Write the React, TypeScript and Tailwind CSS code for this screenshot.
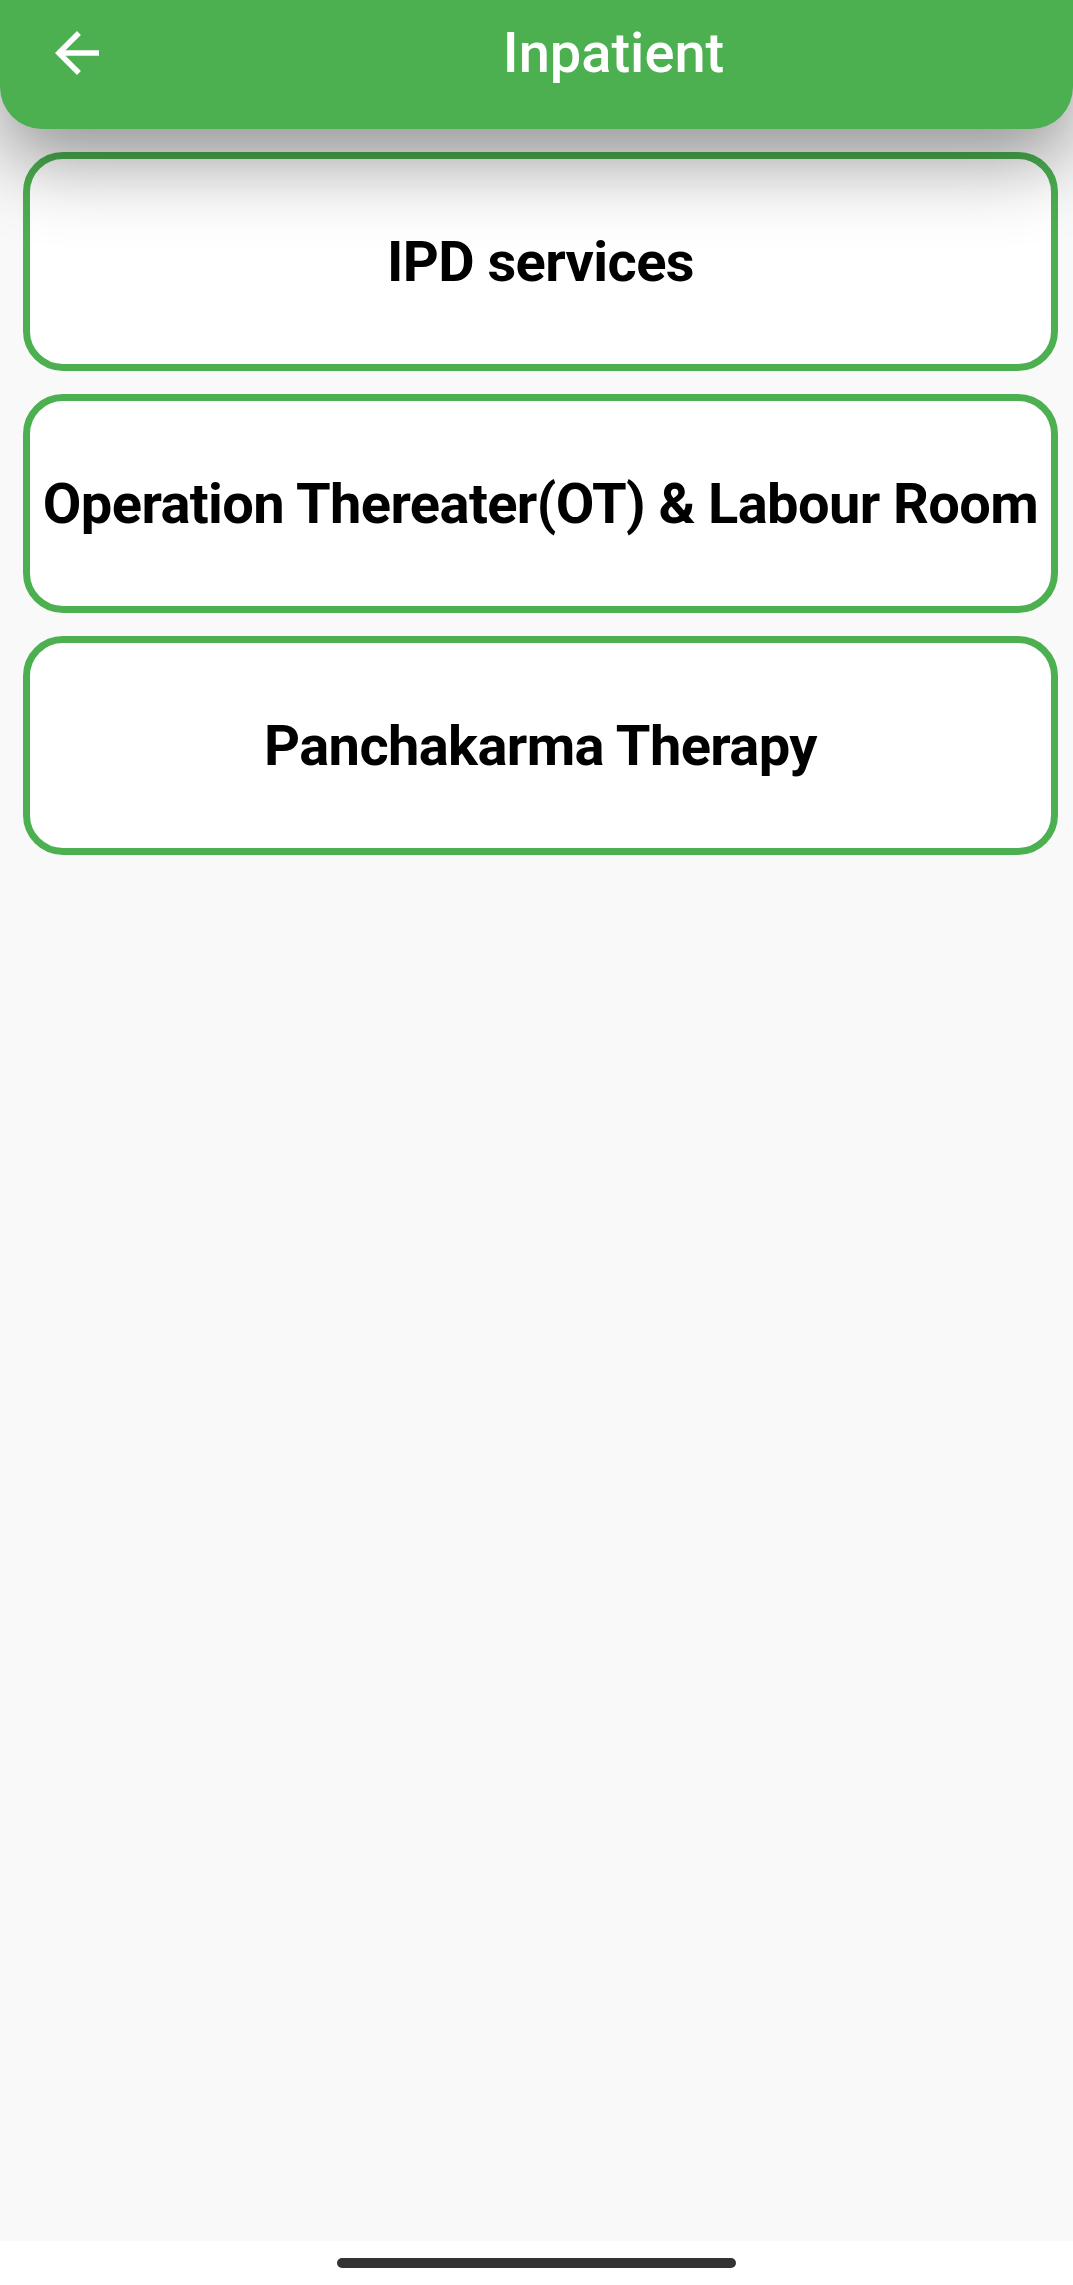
import React from "react";

const ITEMS = [
  "IPD services",
  "Operation Thereater(OT) & Labour Room",
  "Panchakarma Therapy",
];

function BackArrow() {
  return (
    <svg viewBox="0 0 24 24" className="w-[66px] h-[66px]" fill="#ffffff" aria-hidden="true">
      <path d="M20 11H7.83l5.59-5.59L12 4l-8 8 8 8 1.41-1.41L7.83 13H20v-2z" />
    </svg>
  );
}

export default function App() {
  return (
    <div
      className="w-[1073px] h-[2285px] flex flex-col bg-[#f9f9f9] overflow-hidden"
      style={{ fontFamily: "Roboto, 'Noto Sans', sans-serif" }}
    >
      {/* App bar */}
      <header className="relative z-10 h-[129px] shrink-0 bg-[#4caf50] rounded-b-[42px] pb-[25px] shadow-[0_30px_80px_rgba(0,0,0,0.42)]">
        <div className="h-[104px] flex items-center pt-[2px]">
          <button className="w-[154px] h-full flex items-center justify-center" aria-label="Back">
            <BackArrow />
          </button>
          <h1 className="flex-1 text-center text-white text-[56px] font-medium leading-none">
            Inpatient
          </h1>
        </div>
      </header>

      {/* Menu cards */}
      <main className="flex-1 flex flex-col gap-[23px] pt-[23px] pl-[23px] pr-[15px]">
        {ITEMS.map((label) => (
          <button
            key={label}
            className="h-[219px] w-full flex items-center justify-center bg-white border-[7px] border-[#4caf50] rounded-[40px]"
          >
            <span className="text-[56px] font-bold text-black leading-none whitespace-nowrap tracking-[-0.6px]">
              {label}
            </span>
          </button>
        ))}
      </main>

      {/* System nav bar */}
      <div className="h-[44px] shrink-0 bg-white flex justify-center pt-[17px]">
        <div className="w-[399px] h-[10px] rounded-full bg-[#333333]" />
      </div>
    </div>
  );
}
